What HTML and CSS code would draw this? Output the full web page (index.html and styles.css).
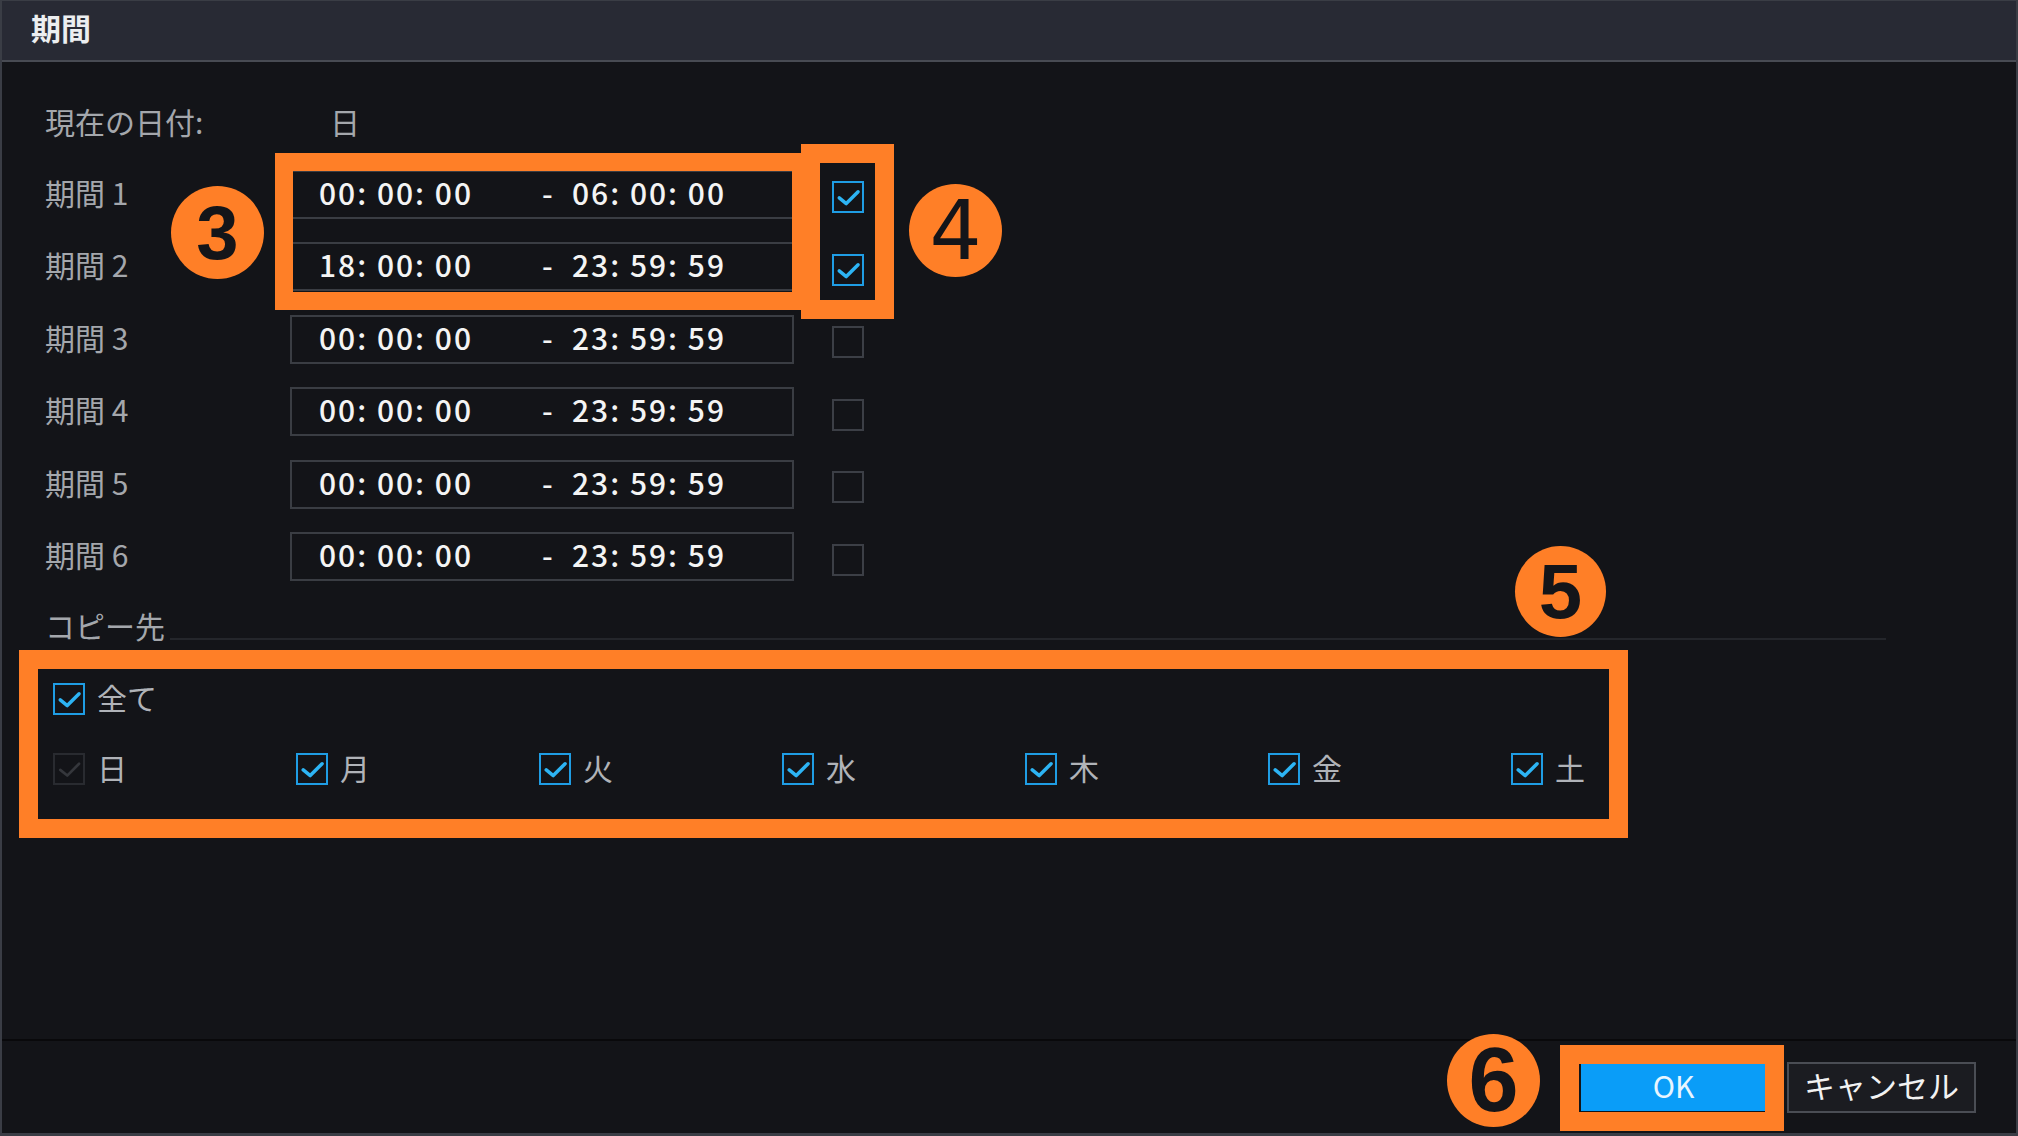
FILE: index.html
```html
<!DOCTYPE html>
<html lang="ja">
<head>
<meta charset="utf-8">
<title>期間</title>
<link rel="stylesheet" href="styles.css">
</head>
<body>
<div class="dialog">
  <div class="titlebar">期間</div>
  <div class="content">
    <div class="row-current">
      <span class="label label-current">現在の日付:</span>
      <span class="value">日</span>
    </div>

    <div class="row-period">
      <span class="label">期間 1</span>
      <div class="timebox"><span class="t1">00: 00: 00</span><span class="dash">-</span><span class="t2">06: 00: 00</span></div>
      <span class="cb checked"><svg viewBox="0 0 32 32"><polyline points="6,17 14,23.5 27.5,10"/></svg></span>
    </div>
    <div class="row-period">
      <span class="label">期間 2</span>
      <div class="timebox"><span class="t1">18: 00: 00</span><span class="dash">-</span><span class="t2">23: 59: 59</span></div>
      <span class="cb checked"><svg viewBox="0 0 32 32"><polyline points="6,17 14,23.5 27.5,10"/></svg></span>
    </div>
    <div class="row-period">
      <span class="label">期間 3</span>
      <div class="timebox"><span class="t1">00: 00: 00</span><span class="dash">-</span><span class="t2">23: 59: 59</span></div>
      <span class="cb"></span>
    </div>
    <div class="row-period">
      <span class="label">期間 4</span>
      <div class="timebox"><span class="t1">00: 00: 00</span><span class="dash">-</span><span class="t2">23: 59: 59</span></div>
      <span class="cb"></span>
    </div>
    <div class="row-period">
      <span class="label">期間 5</span>
      <div class="timebox"><span class="t1">00: 00: 00</span><span class="dash">-</span><span class="t2">23: 59: 59</span></div>
      <span class="cb"></span>
    </div>
    <div class="row-period">
      <span class="label">期間 6</span>
      <div class="timebox"><span class="t1">00: 00: 00</span><span class="dash">-</span><span class="t2">23: 59: 59</span></div>
      <span class="cb"></span>
    </div>

    <div class="copy-head">
      <span class="copy-label">コピー先</span>
      <div class="rule"></div>
    </div>

    <div class="opt-row first">
      <label class="opt"><span class="cb checked"><svg viewBox="0 0 32 32"><polyline points="6,17 14,23.5 27.5,10"/></svg></span><span class="opt-text">全て</span></label>
    </div>
    <div class="opt-row days">
      <label class="opt day"><span class="cb disabled"><svg viewBox="0 0 32 32"><polyline points="6,17 14,23.5 27.5,10"/></svg></span><span class="opt-text">日</span></label>
      <label class="opt day"><span class="cb checked"><svg viewBox="0 0 32 32"><polyline points="6,17 14,23.5 27.5,10"/></svg></span><span class="opt-text">月</span></label>
      <label class="opt day"><span class="cb checked"><svg viewBox="0 0 32 32"><polyline points="6,17 14,23.5 27.5,10"/></svg></span><span class="opt-text">火</span></label>
      <label class="opt day"><span class="cb checked"><svg viewBox="0 0 32 32"><polyline points="6,17 14,23.5 27.5,10"/></svg></span><span class="opt-text">水</span></label>
      <label class="opt day"><span class="cb checked"><svg viewBox="0 0 32 32"><polyline points="6,17 14,23.5 27.5,10"/></svg></span><span class="opt-text">木</span></label>
      <label class="opt day"><span class="cb checked"><svg viewBox="0 0 32 32"><polyline points="6,17 14,23.5 27.5,10"/></svg></span><span class="opt-text">金</span></label>
      <label class="opt day"><span class="cb checked"><svg viewBox="0 0 32 32"><polyline points="6,17 14,23.5 27.5,10"/></svg></span><span class="opt-text">土</span></label>
    </div>
  </div>
  <div class="footer">
    <button class="btn btn-ok">OK</button>
    <button class="btn btn-cancel">キャンセル</button>
  </div>
</div>

<div class="mark box3"></div>
<div class="mark box4"></div>
<div class="mark box5"></div>
<div class="mark box6"></div>
<div class="num n3">3</div>
<div class="num n4">4</div>
<div class="num n5">5</div>
<div class="num n6">6</div>
</body>
</html>
```
FILE: styles.css
```css
* { box-sizing: border-box; margin: 0; padding: 0; }
html, body {
  width: 2018px;
  height: 1136px;
  background: #131418;
  overflow: hidden;
}
body {
  font-family: "Noto Sans CJK JP", "Noto Sans", sans-serif;
  color: #a6a9ae;
}
.dialog {
  width: 2018px;
  height: 1136px;
  display: flex;
  flex-direction: column;
  border-style: solid;
  border-color: #3a3d45;
  border-width: 1px 2px 3px 2px;
  background: #131418;
}
.titlebar {
  height: 61px;
  flex: none;
  background: #282a34;
  border-bottom: 2px solid #484b53;
  padding-left: 29px;
  font-size: 30px;
  font-weight: 700;
  line-height: 52px;
  color: #eceef0;
}
.content {
  flex: 1;
  padding: 26px 0 0 43px;
}
.row-current {
  height: 70px;
  display: flex;
  align-items: center;
  font-size: 30px;
}
.label {
  width: 245px;
  flex: none;
  font-size: 30px;
  color: #a4a7ac;
  margin-bottom: 5px;
}
.label-current { width: 285px; }
.value { color: #a4a7ac; margin-bottom: 5px; }
.row-period {
  height: 72.5px;
  display: flex;
  align-items: center;
}
.timebox {
  width: 504px;
  height: 49px;
  flex: none;
  border: 2px solid #3a3d43;
  display: flex;
  align-items: center;
  padding-left: 27px;
  padding-bottom: 5px;
  font-size: 30px;
  font-weight: 500;
  color: #f4f4f4;
  letter-spacing: 2px;
}
.t1 { width: 221px; }
.dash { width: 32px; padding-left: 2px; }
.cb {
  width: 32px;
  height: 32px;
  flex: none;
  border: 2px solid #3c3f46;
  display: inline-flex;
}
.row-period .cb { margin-left: 38px; margin-top: 6px; }
.cb svg { width: 100%; height: 100%; }
.cb polyline {
  fill: none;
  stroke: #2db4f4;
  stroke-width: 4;
  stroke-linecap: round;
  stroke-linejoin: round;
}
.cb.checked { border-color: #1f9de4; }
.cb.disabled { border-color: #292b30; }
.cb.disabled polyline { stroke: #35373c; stroke-width: 3; }

.copy-head {
  margin-top: 15px;
  height: 40px;
  display: flex;
}
.copy-label {
  font-size: 30px;
  line-height: 35px;
  color: #a4a7ac;
}
.rule {
  flex: 1;
  height: 2px;
  margin: 30px 130px 0 5px;
  background: #24262b;
}
.opt-row {
  height: 70px;
  display: flex;
  align-items: center;
  padding-left: 8px;
}
.opt-row.first { margin-top: 16px; }
.opt {
  display: flex;
  align-items: center;
  gap: 12px;
}
.day { width: 243px; flex: none; }
.opt-text {
  font-size: 30px;
  color: #b0b3b8;
  margin-bottom: 5px;
}

.footer {
  height: 94px;
  flex: none;
  border-top: 2px solid #09090b;
  display: flex;
  justify-content: flex-end;
  align-items: center;
  gap: 21px;
  padding-right: 40px;
}
.btn {
  font-family: "Noto Sans CJK JP", "Noto Sans", sans-serif;
  font-size: 30px;
  display: flex;
  align-items: center;
  justify-content: center;
  padding-bottom: 5px;
}
.btn-ok {
  width: 185px;
  height: 48px;
  background: #0a9df8;
  border: none;
  color: #e8f5ff;
}
.btn-cancel {
  width: 189px;
  height: 51px;
  background: #1b1c21;
  border: 2px solid #4a4d54;
  color: #f2f2f2;
  font-size: 31px;
}

/* annotation overlays */
.mark {
  position: absolute;
  border: 19px solid #ff7f27;
}
.box3 { left: 275px; top: 153px; width: 535px; height: 157px; border-width: 18px; }
.box4 { left: 801px; top: 144px; width: 93px; height: 175px; }
.box5 { left: 19px; top: 650px; width: 1609px; height: 188px; }
.box6 { left: 1560px; top: 1045px; width: 224px; height: 86px; }
.num {
  position: absolute;
  width: 93px;
  height: 93px;
  border-radius: 50%;
  background: #ff7f27;
  color: #141519;
  font-family: "Liberation Sans", "Noto Sans", sans-serif;
  font-weight: 700;
  display: flex;
  align-items: center;
  justify-content: center;
}
.n3 { left: 171px; top: 186px; font-size: 76px; }
.n4 { left: 909px; top: 184px; font-size: 82px; font-weight: 400; font-family: "DejaVu Sans", sans-serif; }
.n5 { left: 1515px; top: 546px; width: 91px; height: 91px; font-size: 78px; }
.n6 { left: 1447px; top: 1034px; font-size: 90px; }
```
